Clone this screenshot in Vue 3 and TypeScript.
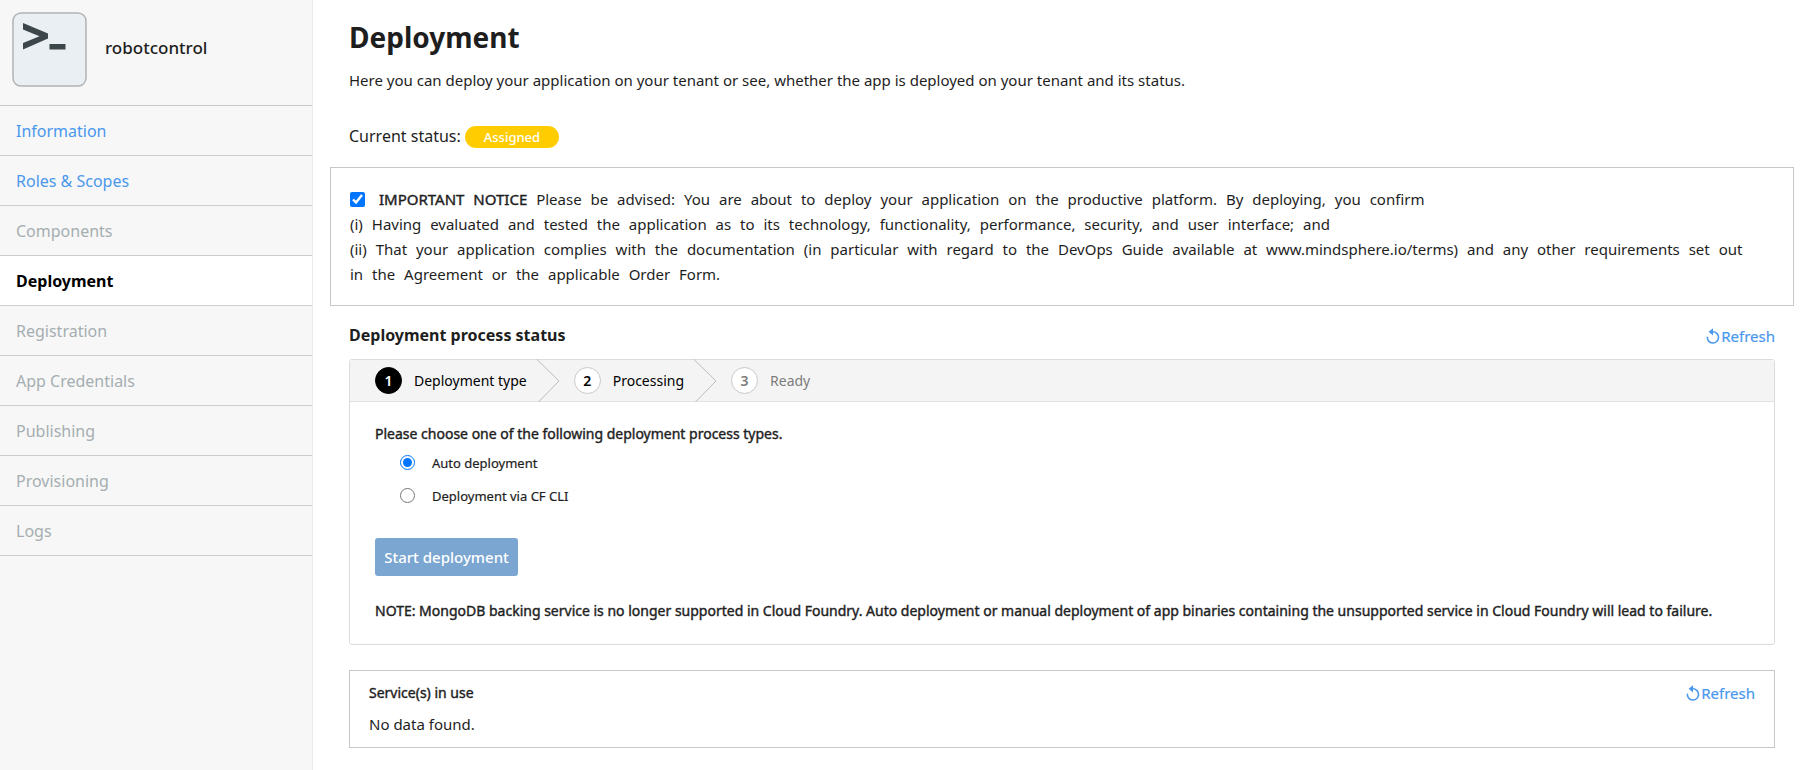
<script setup lang="ts">
import { ref } from 'vue'

type NavItem = { label: string; state: 'link' | 'active' | 'disabled' }

const navItems: NavItem[] = [
  { label: 'Information', state: 'link' },
  { label: 'Roles & Scopes', state: 'link' },
  { label: 'Components', state: 'disabled' },
  { label: 'Deployment', state: 'active' },
  { label: 'Registration', state: 'disabled' },
  { label: 'App Credentials', state: 'disabled' },
  { label: 'Publishing', state: 'disabled' },
  { label: 'Provisioning', state: 'disabled' },
  { label: 'Logs', state: 'disabled' },
]

const steps = ['Deployment type', 'Processing', 'Ready']
const confirmed = ref(true)
const deploymentType = ref<'auto' | 'cli'>('auto')

// The notice is set with widely separated words.
const spaced = (text: string) => text.replace(/ /g, '\u2004 ')

const noticeTitle = spaced('IMPORTANT NOTICE')
const noticeIntro = spaced(
  'Please be advised: You are about to deploy your application on the productive platform. By deploying, you confirm',
)
const noticeLines = [
  '(i) Having evaluated and tested the application as to its technology, functionality, performance, security, and user interface; and',
  '(ii) That your application complies with the documentation (in particular with regard to the DevOps Guide available at www.mindsphere.io/terms) and any other requirements set out in the Agreement or the applicable Order Form.',
].map(spaced)
</script>

<template>
  <div class="page">
    <aside class="sidebar">
      <div class="app-header">
        <svg class="app-logo" viewBox="0 0 75 75" aria-hidden="true">
          <rect x="1" y="1" width="73" height="73" rx="8" fill="#eaeff3" stroke="#b2b3b5" stroke-width="1.5" />
          <path d="M11 11 L36 21.5 V26.5 L11 37.5 V31 L27.5 24.2 L11 17.5 Z" fill="#3c464b" />
          <rect x="37.5" y="32" width="16" height="5.5" fill="#3c464b" />
        </svg>
        <span class="app-name">robotcontrol</span>
      </div>
      <nav>
        <a v-for="item in navItems" :key="item.label" href="#" class="nav-item" :class="item.state">{{ item.label }}</a>
      </nav>
    </aside>

    <main class="main">
      <h1>Deployment</h1>
      <p class="lead">Here you can deploy your application on your tenant or see, whether the app is deployed on your tenant and its status.</p>
      <p class="status">Current status: <span class="badge">Assigned</span></p>

      <section class="notice">
        <input id="confirm" v-model="confirmed" type="checkbox" />
        <label for="confirm"><strong>{{ noticeTitle }}</strong>&#x2004; {{ noticeIntro }}</label>
        <p v-for="line in noticeLines" :key="line">{{ line }}</p>
      </section>

      <div class="process-head">
        <h2>Deployment process status</h2>
        <button type="button" class="refresh">
          <svg viewBox="0 0 14 16" aria-hidden="true">
            <path d="M1.4 8.6 A5.6 5.6 0 1 0 6.6 3.8" fill="none" stroke="currentColor" stroke-width="1.6" />
            <path d="M2.6 3.8 L7 0.2 V7.4 Z" fill="currentColor" />
          </svg>Refresh
        </button>
      </div>

      <section class="card">
        <ol class="stepper">
          <li v-for="(step, i) in steps" :key="step" class="step" :class="{ current: i === 0, pending: i === 2 }">
            <span class="circle">{{ i + 1 }}</span>
            <span>{{ step }}</span>
            <svg v-if="i < 2" class="chevron" viewBox="0 0 24 43" aria-hidden="true">
              <path d="M0.5 0 L23 22 L2.5 43" fill="none" stroke="#bcbcbc" />
            </svg>
          </li>
        </ol>
        <div class="card-body">
          <fieldset>
            <legend>Please choose one of the following deployment process types.</legend>
            <label class="option"><input v-model="deploymentType" type="radio" name="type" value="auto" />Auto deployment</label>
            <label class="option"><input v-model="deploymentType" type="radio" name="type" value="cli" />Deployment via CF CLI</label>
          </fieldset>
          <button type="button" class="start">Start deployment</button>
          <p class="note">NOTE: MongoDB backing service is no longer supported in Cloud Foundry. Auto deployment or manual deployment of app binaries containing the unsupported service in Cloud Foundry will lead to failure.</p>
        </div>
      </section>

      <section class="services">
        <div>
          <h3>Service(s) in use</h3>
          <p>No data found.</p>
        </div>
        <button type="button" class="refresh">
          <svg viewBox="0 0 14 16" aria-hidden="true">
            <path d="M1.4 8.6 A5.6 5.6 0 1 0 6.6 3.8" fill="none" stroke="currentColor" stroke-width="1.6" />
            <path d="M2.6 3.8 L7 0.2 V7.4 Z" fill="currentColor" />
          </svg>Refresh
        </button>
      </section>
    </main>
  </div>
</template>

<style>
body {
  background: #fff;
}
</style>

<style scoped>
* {
  box-sizing: border-box;
}

.page {
  display: flex;
  min-height: 100vh;
  color: #1e1e1e;
  font-family: 'Noto Sans', 'Open Sans', sans-serif;
  font-size: 14px;
  line-height: 24px;
}

h1,
h2,
h3,
p,
ol,
fieldset {
  margin: 0;
  padding: 0;
}

.sidebar {
  flex: 0 0 313px;
  background: #f7f7f7;
  border-right: 1px solid #ebebeb;
}

.app-header {
  display: flex;
  align-items: flex-start;
  gap: 18px;
  height: 106px;
  padding: 12px;
  border-bottom: 1px solid #c8c8c8;
}

.app-logo {
  width: 75px;
  height: 75px;
}

.app-name {
  padding-top: 24px;
  font-size: 17px;
  font-weight: 500;
}

.nav-item {
  display: block;
  height: 50px;
  padding: 0 16px;
  border-bottom: 1px solid #cdcdcd;
  font-size: 16px;
  line-height: 50px;
  text-decoration: none;
}

.link {
  color: #4a98ee;
}

.disabled {
  color: #a5aeb1;
}

.active {
  background: #fff;
  color: #000;
  font-weight: 700;
}

.main {
  flex: 1;
  min-width: 0;
  padding: 17px 32px 22px 36px;
}

h1 {
  font-size: 28px;
  font-weight: 700;
  line-height: 40px;
}

.lead {
  margin-top: 11px;
  font-size: 15px;
}

.status {
  margin-top: 32px;
  font-size: 16px;
}

.badge {
  display: inline-block;
  width: 94px;
  border-radius: 11px;
  background: #fc0;
  color: #fff;
  font-size: 13px;
  font-weight: 500;
  line-height: 22px;
  text-align: center;
}

.notice {
  margin: 19px -19px 0;
  padding: 19px 32px 18px 19px;
  border: 1px solid #c8c8c8;
  font-size: 15px;
  line-height: 25px;
}

.notice input {
  width: 15px;
  height: 15px;
  margin: 0 14px 0 0;
  vertical-align: -2px;
  accent-color: #0075ff;
}

.process-head {
  display: flex;
  align-items: flex-end;
  justify-content: space-between;
  margin-top: 17px;
}

h2 {
  padding-bottom: 1px;
  font-size: 16px;
  font-weight: 700;
}

.refresh {
  display: flex;
  align-items: center;
  gap: 1px;
  padding: 0;
  border: 0;
  background: none;
  color: #4a98ee;
  font: inherit;
  font-size: 15px;
}

.refresh svg {
  width: 14px;
  height: 16px;
}

.card {
  margin-top: 11px;
  border: 1px solid #dcdcdc;
  border-radius: 3px;
}

.stepper {
  display: flex;
  height: 42px;
  padding-left: 25px;
  border-bottom: 1px solid #e2e2e2;
  background: #f4f4f4;
  list-style: none;
}

.step {
  display: flex;
  align-items: center;
  color: #000;
}

.pending {
  color: #7c7c7c;
}

.circle {
  width: 27px;
  height: 27px;
  margin-right: 12px;
  border: 1px solid #c8c8c8;
  border-radius: 50%;
  background: #fff;
  font-weight: 600;
  line-height: 25px;
  text-align: center;
}

.current .circle {
  border-color: #000;
  background: #000;
  color: #fff;
}

.chevron {
  width: 24px;
  height: 43px;
  margin: 0 14px 0 9px;
}

.card-body {
  padding: 20px 25px 21px;
}

fieldset {
  border: 0;
}

legend,
.note,
.notice strong,
h3 {
  font-weight: 400;
  -webkit-text-stroke: 0.4px currentColor;
}

.refresh,
.option {
  -webkit-text-stroke: 0.2px currentColor;
}

legend {
  padding: 0;
}

.option {
  display: flex;
  align-items: center;
  height: 33px;
  font-size: 13px;
}

.option input {
  width: 15px;
  height: 15px;
  margin: 0 17px 0 25px;
}

.start {
  display: block;
  width: 143px;
  height: 38px;
  margin-top: 26px;
  padding: 0;
  border: 0;
  border-radius: 3px;
  background: #7aa6d1;
  color: #fff;
  font: inherit;
  font-size: 15px;
  font-weight: 500;
}

.note {
  margin-top: 23px;
}

.services {
  display: flex;
  align-items: flex-start;
  justify-content: space-between;
  margin-top: 25px;
  padding: 10px 19px 11px;
  border: 1px solid #c8c8c8;
}

h3 {
  font-size: 14px;
}

.services p {
  margin-top: 7px;
  font-size: 15px;
}
</style>
